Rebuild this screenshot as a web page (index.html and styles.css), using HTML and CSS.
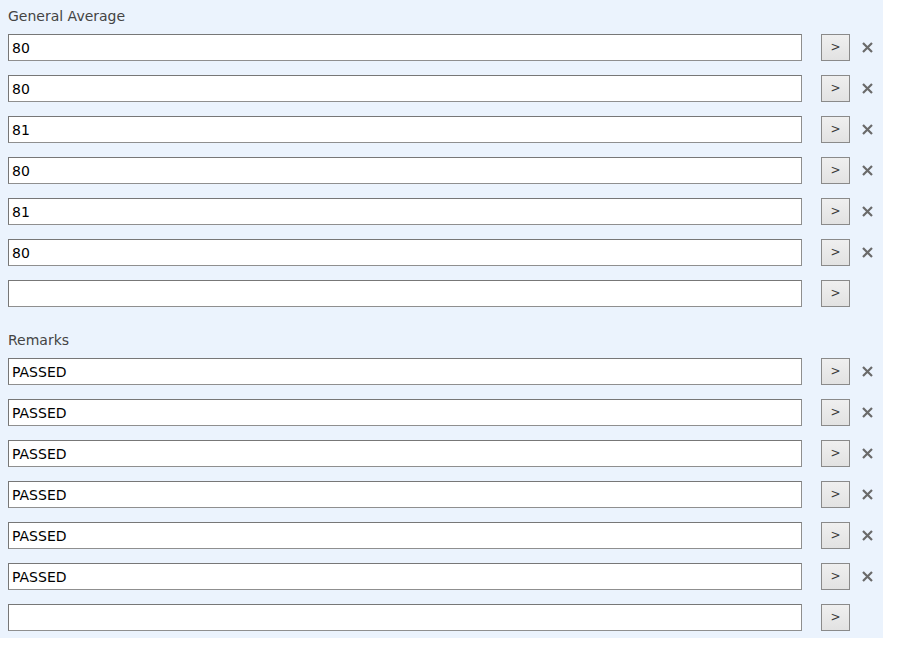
FILE: index.html
```html
<!DOCTYPE html>
<html>
<head>
<meta charset="utf-8">
<link rel="stylesheet" href="styles.css">
</head>
<body>
<div class="panel">
  <div class="section">
    <div class="label">General Average</div>
    <div class="rows">
      <div class="row"><input class="field" type="text" value="80"><button class="go">&gt;</button><span class="del"><svg viewBox="0 0 11 11" width="11" height="11"><path d="M1 1L10 10M10 1L1 10"/></svg></span></div>
      <div class="row"><input class="field" type="text" value="80"><button class="go">&gt;</button><span class="del"><svg viewBox="0 0 11 11" width="11" height="11"><path d="M1 1L10 10M10 1L1 10"/></svg></span></div>
      <div class="row"><input class="field" type="text" value="81"><button class="go">&gt;</button><span class="del"><svg viewBox="0 0 11 11" width="11" height="11"><path d="M1 1L10 10M10 1L1 10"/></svg></span></div>
      <div class="row"><input class="field" type="text" value="80"><button class="go">&gt;</button><span class="del"><svg viewBox="0 0 11 11" width="11" height="11"><path d="M1 1L10 10M10 1L1 10"/></svg></span></div>
      <div class="row"><input class="field" type="text" value="81"><button class="go">&gt;</button><span class="del"><svg viewBox="0 0 11 11" width="11" height="11"><path d="M1 1L10 10M10 1L1 10"/></svg></span></div>
      <div class="row"><input class="field" type="text" value="80"><button class="go">&gt;</button><span class="del"><svg viewBox="0 0 11 11" width="11" height="11"><path d="M1 1L10 10M10 1L1 10"/></svg></span></div>
      <div class="row"><input class="field" type="text" value=""><button class="go">&gt;</button></div>
    </div>
  </div>
  <div class="section second">
    <div class="label">Remarks</div>
    <div class="rows">
      <div class="row"><input class="field" type="text" value="PASSED"><button class="go">&gt;</button><span class="del"><svg viewBox="0 0 11 11" width="11" height="11"><path d="M1 1L10 10M10 1L1 10"/></svg></span></div>
      <div class="row"><input class="field" type="text" value="PASSED"><button class="go">&gt;</button><span class="del"><svg viewBox="0 0 11 11" width="11" height="11"><path d="M1 1L10 10M10 1L1 10"/></svg></span></div>
      <div class="row"><input class="field" type="text" value="PASSED"><button class="go">&gt;</button><span class="del"><svg viewBox="0 0 11 11" width="11" height="11"><path d="M1 1L10 10M10 1L1 10"/></svg></span></div>
      <div class="row"><input class="field" type="text" value="PASSED"><button class="go">&gt;</button><span class="del"><svg viewBox="0 0 11 11" width="11" height="11"><path d="M1 1L10 10M10 1L1 10"/></svg></span></div>
      <div class="row"><input class="field" type="text" value="PASSED"><button class="go">&gt;</button><span class="del"><svg viewBox="0 0 11 11" width="11" height="11"><path d="M1 1L10 10M10 1L1 10"/></svg></span></div>
      <div class="row"><input class="field" type="text" value="PASSED"><button class="go">&gt;</button><span class="del"><svg viewBox="0 0 11 11" width="11" height="11"><path d="M1 1L10 10M10 1L1 10"/></svg></span></div>
      <div class="row"><input class="field" type="text" value=""><button class="go">&gt;</button></div>
    </div>
  </div>
</div>
</body>
</html>
```

FILE: styles.css
```css
html, body {
  margin: 0;
  padding: 0;
  background: #ffffff;
}

.panel {
  width: 883px;
  box-sizing: border-box;
  background: #ebf3fd;
  padding: 8px 0 7px 8px;
  font-family: "DejaVu Sans", Verdana, sans-serif;
  font-size: 14px;
}

.section.second {
  margin-top: 25px;
}

.label {
  color: #444444;
  line-height: 16px;
  height: 16px;
  margin-bottom: 10px;
}

.rows {
  display: flex;
  flex-direction: column;
  gap: 14px;
}

.row {
  display: flex;
  align-items: center;
  height: 27px;
}

.field {
  box-sizing: border-box;
  width: 794px;
  height: 27px;
  margin: 0;
  padding: 0 3px;
  border: 1px solid #8f8f8f;
  border-top-color: #777777;
  border-left-color: #777777;
  background: #ffffff;
  font-family: "DejaVu Sans", Verdana, sans-serif;
  font-size: 14px;
  color: #000000;
  outline: none;
}

.go {
  box-sizing: border-box;
  width: 29px;
  height: 27px;
  margin: 0 0 0 19px;
  padding: 0;
  border: 1px solid #8a8a8a;
  background: linear-gradient(#efefef, #e2e2e2);
  font-family: "DejaVu Sans", Verdana, sans-serif;
  font-size: 12px;
  color: #3a3a3a;
  line-height: 25px;
  text-align: center;
}

.del {
  display: flex;
  align-items: center;
  margin-left: 12px;
  width: 11px;
  height: 11px;
}

.del svg path {
  stroke: #6a6a6a;
  stroke-width: 2.2;
  fill: none;
}
```
